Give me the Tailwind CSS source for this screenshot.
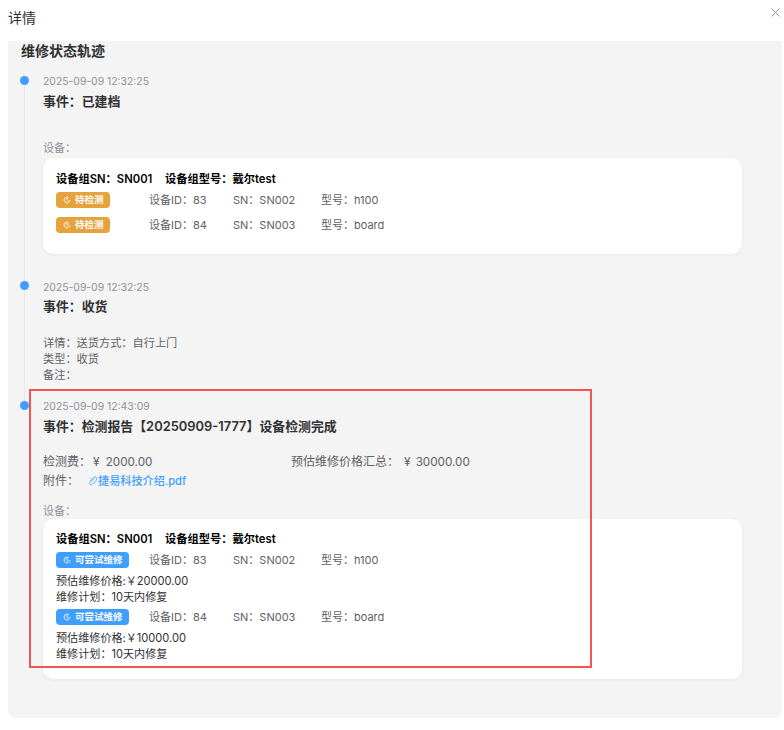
<!DOCTYPE html>
<html>
<head>
    <meta charset="UTF-8">
    <title>详情</title>
    <script src="https://cdn.jsdelivr.net/npm/@tailwindcss/browser@4"></script>
</head>
<body class="bg-white font-['Inter','Noto_Sans_CJK_SC',sans-serif] text-[12px] leading-4 text-[#606266] overflow-hidden">
    <div class="relative w-[784px] h-[730px] overflow-hidden">
        <!-- Header -->
        <div class="h-[41px] pl-2 pt-[9px] text-[14px] leading-[18px] text-[#303133]">详情</div>
        <svg class="absolute top-[8px] right-[4px] w-[9px] h-[9px] text-[#909399]" viewBox="0 0 9 9" fill="none" stroke="currentColor" stroke-width="1">
            <path d="M0.5 0.5l8 8M8.5 0.5l-8 8"/>
        </svg>

        <!-- Panel -->
        <div class="ml-2 mr-[2px] h-[677px] bg-[#f4f4f5] rounded-b-lg pl-[13px]">
            <h2 class="h-[32px] pt-px text-[14px] leading-[18px] font-semibold text-[#303133]">维修状态轨迹</h2>

            <!-- Event 1 -->
            <div class="relative pl-[22px] h-[205px]">
                <div class="absolute left-[-1px] top-[3px] w-[9px] h-[9px] rounded-full bg-[#409eff]"></div>
                <div class="absolute left-[3px] top-[12px] w-px h-[196px] bg-[#e4e7ed]"></div>
                <div class="pt-px text-[10.4px] leading-[16px] text-[#909399]">2025-09-09 12:32:25</div>
                <div class="mt-[4px] text-[12.9px] leading-4 font-semibold text-[#303133]">事件：已建档</div>
                <div class="mt-[30px] text-[11px] leading-4 text-[#909399]">设备：</div>
                <div class="mt-[2px] w-[699px] h-[96px] bg-white rounded-[10px] shadow-[0_1px_4px_rgba(0,0,0,0.06)] px-[13px] pt-[13px]">
                    <div class="flex text-[11.25px] leading-4 font-semibold text-black">
                        <span class="w-[109px]">设备组SN：SN001</span>
                        <span>设备组型号：戴尔test</span>
                    </div>
                    <div class="mt-[5px] flex items-center h-4">
                        <span class="w-[93px]"><span class="inline-flex items-center w-[54px] h-4 pl-[7px] gap-[4px] rounded-[4px] bg-[#e6a23c] text-white text-[9.5px] font-semibold leading-4"><svg class="w-[8px] h-[8px]" viewBox="0 0 8 8" fill="none" stroke="currentColor" stroke-width="0.9"><path d="M6.9 4a2.9 2.9 0 1 1-1.2-2.35"/><path d="M4 2v2.2l1.3 1"/></svg>待检测</span></span>
                        <span class="w-[84px] text-[11px]">设备ID：83</span>
                        <span class="w-[88px] text-[11px]">SN：SN002</span>
                        <span class="text-[11px]">型号：h100</span>
                    </div>
                    <div class="mt-[9px] flex items-center h-4">
                        <span class="w-[93px]"><span class="inline-flex items-center w-[54px] h-4 pl-[7px] gap-[4px] rounded-[4px] bg-[#e6a23c] text-white text-[9.5px] font-semibold leading-4"><svg class="w-[8px] h-[8px]" viewBox="0 0 8 8" fill="none" stroke="currentColor" stroke-width="0.9"><path d="M6.9 4a2.9 2.9 0 1 1-1.2-2.35"/><path d="M4 2v2.2l1.3 1"/></svg>待检测</span></span>
                        <span class="w-[84px] text-[11px]">设备ID：84</span>
                        <span class="w-[88px] text-[11px]">SN：SN003</span>
                        <span class="text-[11px]">型号：board</span>
                    </div>
                </div>
            </div>

            <!-- Event 2 -->
            <div class="relative pl-[22px] h-[120px]">
                <div class="absolute left-[-1px] top-[3px] w-[9px] h-[9px] rounded-full bg-[#409eff]"></div>
                <div class="absolute left-[3px] top-[12px] w-px h-[111px] bg-[#e4e7ed]"></div>
                <div class="pt-[2px] text-[10.4px] leading-[16px] text-[#909399]">2025-09-09 12:32:25</div>
                <div class="mt-[3px] text-[12.9px] leading-4 font-semibold text-[#303133]">事件：收货</div>
                <div class="mt-[20px] text-[11.2px] leading-4">
                    <div>详情：送货方式：自行上门</div>
                    <div>类型：收货</div>
                    <div>备注：</div>
                </div>
            </div>

            <!-- Event 3 -->
            <div class="relative pl-[22px]">
                <div class="absolute left-[-1px] top-[3px] w-[9px] h-[9px] rounded-full bg-[#409eff]"></div>
                <div class="pt-px text-[10.4px] leading-[16px] text-[#909399]">2025-09-09 12:43:09</div>
                <div class="mt-[4px] text-[12.9px] leading-4 font-semibold text-[#303133]">事件：检测报告【20250909-1777】设备检测完成</div>
                <div class="mt-[19px] flex text-[12px] leading-4">
                    <span class="w-[248px]">检测费：<span class="ml-[2px]">¥</span><span class="ml-[6px] text-[11.7px]">2000.00</span></span>
                    <span>预估维修价格汇总：<span class="ml-[5px]">¥</span><span class="ml-[5px] text-[11.7px]">30000.00</span></span>
                </div>
                <div class="mt-[3px] flex items-center text-[12px] leading-4">
                    <span class="w-[45px]">附件：</span>
                    <svg class="w-[10px] h-[10px] text-[#409eff]" viewBox="0 0 10 10" fill="none" stroke="currentColor" stroke-width="0.8"><path d="M6.3 2.2L2 6.5a1.4 1.4 0 0 0 2 2l4.3-4.4a1.9 1.9 0 0 0-2.7-2.7L1.6 5.4"/></svg>
                    <span class="text-[#409eff] font-medium text-[11.15px]">捷易科技介绍.pdf</span>
                </div>
                <div class="mt-[14px] text-[11px] leading-4 text-[#909399]">设备：</div>
                <div class="w-[699px] h-[160px] bg-white rounded-[10px] shadow-[0_1px_4px_rgba(0,0,0,0.06)] px-[13px] pt-[12px]">
                    <div class="flex text-[11.25px] leading-4 font-semibold text-black">
                        <span class="w-[109px]">设备组SN：SN001</span>
                        <span>设备组型号：戴尔test</span>
                    </div>
                    <div class="mt-[5px] flex items-center h-4">
                        <span class="w-[93px]"><span class="inline-flex items-center w-[73px] h-4 pl-[7px] gap-[4px] rounded-[4px] bg-[#409eff] text-white text-[9.5px] font-semibold leading-4"><svg class="w-[8px] h-[8px]" viewBox="0 0 8 8" fill="none" stroke="currentColor" stroke-width="0.9"><path d="M6.9 4a2.9 2.9 0 1 1-1.2-2.35"/><path d="M4 2v2.2l1.3 1"/></svg>可尝试维修</span></span>
                        <span class="w-[84px] text-[11px]">设备ID：83</span>
                        <span class="w-[88px] text-[11px]">SN：SN002</span>
                        <span class="text-[11px]">型号：h100</span>
                    </div>
                    <div class="mt-[5px] text-[11.1px] leading-4 text-[#303133]">预估维修价格:￥20000.00</div>
                    <div class="text-[11.1px] leading-4 text-[#303133]">维修计划：10天内修复</div>
                    <div class="mt-[4px] flex items-center h-4">
                        <span class="w-[93px]"><span class="inline-flex items-center w-[73px] h-4 pl-[7px] gap-[4px] rounded-[4px] bg-[#409eff] text-white text-[9.5px] font-semibold leading-4"><svg class="w-[8px] h-[8px]" viewBox="0 0 8 8" fill="none" stroke="currentColor" stroke-width="0.9"><path d="M6.9 4a2.9 2.9 0 1 1-1.2-2.35"/><path d="M4 2v2.2l1.3 1"/></svg>可尝试维修</span></span>
                        <span class="w-[84px] text-[11px]">设备ID：84</span>
                        <span class="w-[88px] text-[11px]">SN：SN003</span>
                        <span class="text-[11px]">型号：board</span>
                    </div>
                    <div class="mt-[5px] text-[11.1px] leading-4 text-[#303133]">预估维修价格:￥10000.00</div>
                    <div class="text-[11.1px] leading-4 text-[#303133]">维修计划：10天内修复</div>
                </div>
            </div>
        </div>

        <!-- Red annotation box -->
        <div class="absolute left-[29px] top-[389px] w-[563px] h-[279px] border-2 border-[#f55454]"></div>
    </div>
</body>
</html>
